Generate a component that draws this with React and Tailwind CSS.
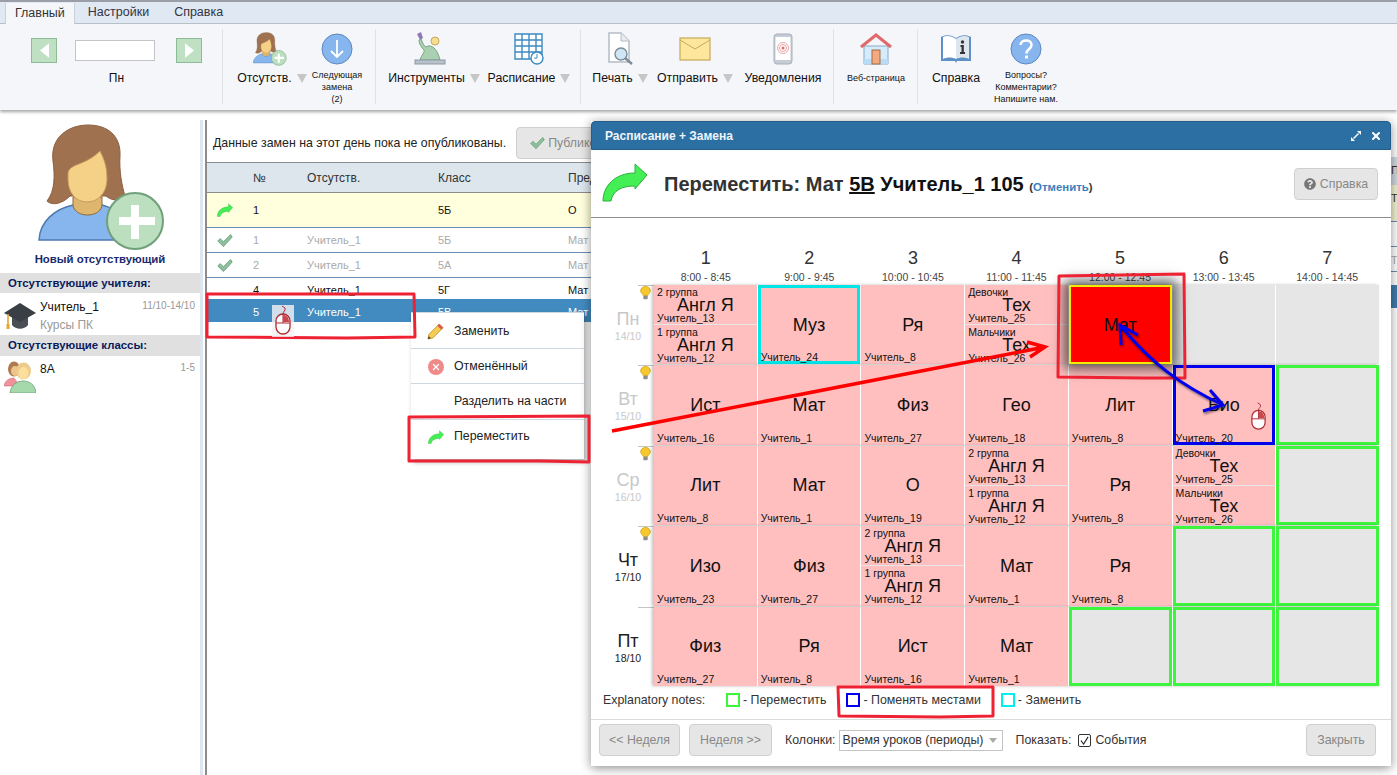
import { X } from "lucide-react";
import { FaQuestionCircle } from "react-icons/fa";

const TIMES = ["8:00 - 8:45", "9:00 - 9:45", "10:00 - 10:45", "11:00 - 11:45", "12:00 - 12:45", "13:00 - 13:45", "14:00 - 14:45"];

const eng = (a, b) => ({ split: [["2 группа", "Англ Я", a], ["1 группа", "Англ Я", b]] });
const tech = { split: [["Девочки", "Тех", "Учитель_25"], ["Мальчики", "Тех", "Учитель_26"]] };
const empty = { kind: "empty" };
const free = { kind: "free" };

const DAYS = [
  {
    name: "Пн", date: "14/10", dim: true, bulb: true,
    cells: [
      eng("Учитель_13", "Учитель_12"),
      { s: "Муз", t: "Учитель_24", kind: "swap" },
      { s: "Ря", t: "Учитель_8" },
      tech,
      { s: "Мат", kind: "current" },
      empty,
      empty,
    ],
  },
  {
    name: "Вт", date: "15/10", dim: true, bulb: true,
    cells: [
      { s: "Ист", t: "Учитель_16" },
      { s: "Мат", t: "Учитель_1" },
      { s: "Физ", t: "Учитель_27" },
      { s: "Гео", t: "Учитель_18" },
      { s: "Лит", t: "Учитель_8" },
      { s: "Био", t: "Учитель_20", kind: "blue" },
      free,
    ],
  },
  {
    name: "Ср", date: "16/10", dim: true, bulb: true,
    cells: [
      { s: "Лит", t: "Учитель_8" },
      { s: "Мат", t: "Учитель_1" },
      { s: "О", t: "Учитель_19" },
      eng("Учитель_13", "Учитель_12"),
      { s: "Ря", t: "Учитель_8" },
      tech,
      free,
    ],
  },
  {
    name: "Чт", date: "17/10", bulb: true,
    cells: [
      { s: "Изо", t: "Учитель_23" },
      { s: "Физ", t: "Учитель_27" },
      eng("Учитель_13", "Учитель_12"),
      { s: "Мат", t: "Учитель_1" },
      { s: "Ря", t: "Учитель_8" },
      free,
      free,
    ],
  },
  {
    name: "Пт", date: "18/10",
    cells: [
      { s: "Физ", t: "Учитель_27" },
      { s: "Ря", t: "Учитель_8" },
      { s: "Ист", t: "Учитель_16" },
      { s: "Мат", t: "Учитель_1" },
      free,
      free,
      free,
    ],
  },
];

const ROWS = [
  { n: "1", who: "", cls: "5Б", sub: "О", h: "h-[35px]", tone: "bg-[#ffffdd] text-[#111]", icon: "move" },
  { n: "1", who: "Учитель_1", cls: "5Б", sub: "Мат", h: "h-[25px] pt-px", tone: "text-[#aaa]", icon: "check" },
  { n: "2", who: "Учитель_1", cls: "5А", sub: "Мат", h: "h-[25px] pt-px", tone: "text-[#aaa]", icon: "check" },
  { n: "4", who: "Учитель_1", cls: "5Г", sub: "Мат", h: "h-[21px]", tone: "text-[#111] pt-[4px]" },
  { n: "5", who: "Учитель_1", cls: "5В", sub: "Мат", h: "h-[23px] pt-[3px]", tone: "bg-[#428bc0] text-white" },
];

function Avatar({ className }) {
  return (
    <svg viewBox="38 123 128 127" className={className}>
      <path d="M47 200C55 190 55 175 53 160C50 135 70 124 88 124C108 124 121 135 120 155C119 170 122 185 125 195C118 200 112 200 106 195L70 195C62 203 52 205 47 200Z" fill="#a0714f" stroke="#8a5f40" />
      <path d="M39 239C40 220 55 208 73 204C78 216 97 216 102 204C118 208 130 220 132 239Z" fill="#87b5ed" stroke="#4f7ab0" strokeWidth="1.5" />
      <path d="M73 196L73 205C76 217 99 217 102 205L102 196Z" fill="#deb66e" stroke="#8a6a3c" />
      <path d="M68 172C70 162 85 165 100 150C104 158 107 165 107 178C107 192 98 201 87 201C76 201 68 192 68 178Z" fill="#f5d188" stroke="#c79a5e" />
      <circle cx="135" cy="220" r="28" fill="#bcdfc0" stroke="#6fa07a" strokeWidth="2" />
      <path d="M131 204h8v12h16v8h-16v14h-8v-14h-12v-8h12z" fill="#fff" />
    </svg>
  );
}

function MoveArrow({ className }) {
  return (
    <svg viewBox="602 164 46 40" className={className}>
      <path d="M603 203C603 188 615 175 635 175L635 166L647 177L635 191L635 188C622 188 613 192 611 203Z" fill="#44ee55" stroke="#2cb03c" />
    </svg>
  );
}

function Check({ className }) {
  return (
    <svg viewBox="0 0 20 20" className={className}>
      <path d="M1 10L4 7L8 11L17 2L19 5L8 17Z" fill="#8fc09c" stroke="#5f9a72" />
    </svg>
  );
}

function MouseIcon({ className }) {
  return (
    <svg viewBox="0 0 18 30" className={className}>
      <path d="M9 9C9 6 12 6 11 3L8 1" fill="none" stroke="#b02a30" />
      <rect x="2" y="9" width="14" height="20" rx="7" fill="#fff" stroke="#b02a30" strokeWidth="1.3" />
      <path d="M2 18H16M9 9V18" stroke="#b02a30" />
      <path d="M9 10C13 10 15 13 15 17H9Z" fill="#c9484d" />
    </svg>
  );
}

function Bulb() {
  return (
    <svg viewBox="0 0 12 16" className="w-[11px] h-[14px]">
      <path d="M6 0.5C9 0.5 11.5 2.6 11.5 5.5C11.5 8 9 9 8.5 11H3.5C3 9 0.5 8 0.5 5.5C0.5 2.6 3 0.5 6 0.5Z" fill="#f7c82e" stroke="#d9a520" />
      <rect x="3.5" y="11" width="5" height="4" rx="1" fill="#8d8d8d" />
    </svg>
  );
}

function NavBtn({ flip }) {
  return (
    <div className="w-[26px] h-[25px] flex items-center justify-center bg-[#bfe0c2] border border-[#8dbb96]">
      <svg viewBox="0 0 10 16" className={`w-[9px] h-[15px] ${flip ? "rotate-180" : ""}`}>
        <path d="M10 0V16L0 8Z" fill="#fff" />
      </svg>
    </div>
  );
}

function Caret() {
  return <span className="inline-block ml-[5px] border-x-[5px] border-t-[9px] border-x-transparent border-t-[#c6c6c6]" />;
}

function RibbonItem({ icon, label, caret, small, width }) {
  return (
    <div className={`${width} shrink-0 flex flex-col items-center`}>
      <div className="h-[34px] flex items-center justify-center">{icon}</div>
      {small ? (
        <div className="mt-[3px] text-center text-[9px] leading-[12px] text-[#111]">{label}</div>
      ) : (
        <div className="mt-[3px] h-[18px] flex items-center whitespace-nowrap text-[12.3px] text-[#111]">
          {label}
          {caret && <Caret />}
        </div>
      )}
    </div>
  );
}

const Sep = () => <div className="w-px h-[75px] -mt-[3px] bg-[#dfe3e8] shrink-0" />;

function Ribbon() {
  return (
    <header className="h-[110px] shrink-0 flex flex-col border-t-2 border-t-[#9a9ea6] shadow-[0_2px_3px_rgba(0,0,0,0.35)] bg-[#f4f6f9]">
      <div className="h-[22px] flex items-end pl-[5px] bg-[#dfe8f3] border-b border-[#b8bfc9] text-[12.5px] text-[#334]">
        <div className="h-[21px] -mb-px px-[9px] flex items-center bg-[#f4f6f9] border-x border-[#c8d0da] text-[#333]">Главный</div>
        <div className="h-[21px] px-[13px] flex items-center">Настройки</div>
        <div className="h-[21px] px-[12px] flex items-center">Справка</div>
      </div>
      <div className="flex items-start pt-[8px]">
        <div className="w-[222px] shrink-0 flex flex-col pl-[31px] pt-[6px]">
          <div className="flex items-center">
            <NavBtn />
            <div className="ml-[18px] w-[80px] h-[21px] bg-white border border-[#c4c4c4]" />
            <div className="ml-[21px]"><NavBtn flip /></div>
          </div>
          <div className="mt-[7px] w-[171px] text-center text-xs text-[#111]">Пн</div>
        </div>
        <Sep />
        <div className="flex pl-[14px] w-[152px] shrink-0">
          <RibbonItem width="w-[70px]" label="Отсутств." caret icon={<Avatar className="w-[34px] h-[34px] mr-[5px]" />} />
          <RibbonItem width="w-[60px]" small label={<>Следующая<br />замена<br />(2)</>} icon={
            <svg viewBox="0 0 32 32" className="w-[32px] h-[32px]">
              <circle cx="16" cy="16" r="15" fill="#87b5ed" stroke="#5c88c4" />
              <path d="M16 7V24M10 18L16 24L22 18" fill="none" stroke="#fff" strokeWidth="1.8" />
            </svg>
          } />
        </div>
        <Sep />
        <div className="flex pl-[13px] w-[204px] shrink-0 gap-[10px]">
          <RibbonItem width="w-[90px]" label="Инструменты" caret icon={
            <svg viewBox="0 0 32 34" className="w-[32px] h-[34px] mr-[8px]">
              <path d="M3 2L7 0L9 6L6 8Z" fill="#8f7ab8" />
              <path d="M7 7C10 14 11 16 14 14C20 13 24 20 26 28H6C8 22 11 20 10 18C6 14 5 10 5 8Z" fill="#a9d0b0" stroke="#76a583" />
              <circle cx="21" cy="9" r="4" fill="#f7dd94" stroke="#c9a95a" />
              <rect x="1" y="28" width="30" height="4" fill="#b9c2cc" stroke="#8c97a3" />
            </svg>
          } />
          <RibbonItem width="w-[80px]" label="Расписание" caret icon={
            <svg viewBox="0 0 30 32" className="w-[30px] h-[32px]">
              <path d="M1 1H28V26H1ZM1 7H28M1 13H28M1 19H28M8 1V26M15 1V26M22 1V26" fill="#fff" stroke="#3d8ac4" strokeWidth="1.4" />
              <circle cx="23" cy="25" r="6" fill="#fff" stroke="#3d8ac4" strokeWidth="1.4" />
              <path d="M23 21V25H20" fill="none" stroke="#3d8ac4" />
            </svg>
          } />
        </div>
        <Sep />
        <div className="flex pl-[13px] w-[252px] shrink-0 gap-[13px]">
          <RibbonItem width="w-[52px]" label="Печать" caret icon={
            <svg viewBox="0 0 30 34" className="w-[30px] h-[34px]">
              <path d="M4 1H16L24 9V30H4Z" fill="#fff" stroke="#b4bcc5" strokeWidth="1.5" />
              <path d="M16 1V9H24" fill="#e8ecf0" stroke="#b4bcc5" />
              <circle cx="16" cy="22" r="6" fill="#cfe6f5" stroke="#7e8b96" strokeWidth="1.4" />
              <path d="M20 26L27 32" stroke="#7e8b96" strokeWidth="2.4" />
            </svg>
          } />
          <RibbonItem width="w-[72px]" label="Отправить" caret icon={
            <svg viewBox="0 0 32 24" className="w-[32px] h-[24px]">
              <rect x="1" y="1" width="30" height="22" fill="#fde79c" stroke="#c7a95a" strokeWidth="1.2" />
              <path d="M1 3L16 12L31 3" fill="none" stroke="#c7a95a" />
            </svg>
          } />
          <RibbonItem width="w-[78px]" label="Уведомления" icon={
            <svg viewBox="0 0 20 32" className="w-[20px] h-[32px]">
              <rect x="1" y="1" width="18" height="30" rx="3" fill="#c5ccd6" stroke="#a8b0bb" />
              <rect x="2.5" y="4" width="15" height="23" fill="#fff" />
              <circle cx="10" cy="15" r="5.5" fill="none" stroke="#efa4a4" />
              <circle cx="10" cy="15" r="3.5" fill="none" stroke="#efa4a4" />
              <circle cx="10" cy="15" r="1.5" fill="#e46a6a" />
            </svg>
          } />
        </div>
        <Sep />
        <div className="flex pl-[13px] w-[83px] shrink-0">
          <RibbonItem width="w-[58px]" small label={<span className="leading-[18px]">Веб-страница</span>} icon={
            <svg viewBox="0 0 32 32" className="w-[32px] h-[32px]">
              <path d="M4 13H28V31H4Z" fill="#d4ecfb" stroke="#85aacb" />
              <path d="M4 26H28V31H4Z" fill="#b8dcf5" />
              <path d="M1 14L16 2L31 14" fill="none" stroke="#df6a6a" strokeWidth="3" />
              <rect x="12" y="17" width="8" height="14" fill="#f5a97f" stroke="#a36a45" />
            </svg>
          } />
        </div>
        <Sep />
        <div className="flex pl-[13px] shrink-0 gap-[12px]">
          <RibbonItem width="w-[50px]" label="Справка" icon={
            <svg viewBox="0 0 32 30" className="w-[32px] h-[30px]">
              <path d="M1 3C6 0 12 1 16 4C20 1 26 0 31 3V27H17L16 29L15 27H1Z" fill="#5f8fc7" />
              <path d="M3 3C7 1 12 2 16 5V25C12 23 7 23 3 25Z" fill="#fff" />
              <path d="M16 5C20 2 25 1 29 3V25C25 23 20 23 16 25Z" fill="#dde6ee" />
              <circle cx="22.5" cy="8" r="1.7" fill="#333" />
              <path d="M20.5 11H23.8V18H25V20H20V18H21.5V13H20.5Z" fill="#333" />
            </svg>
          } />
          <RibbonItem width="w-[66px]" small label={<>Вопросы?<br />Комментарии?<br />Напишите нам.</>} icon={
            <svg viewBox="0 0 32 32" className="w-[32px] h-[32px]">
              <circle cx="16" cy="16" r="15" fill="#87b5ed" stroke="#5c88c4" />
              <path d="M10.5 12C11 6 21.5 6 21.5 12C21.5 16 16.5 16 16.5 20.5" fill="none" stroke="#fff" strokeWidth="2.6" />
              <rect x="15" y="22.5" width="3" height="3" fill="#fff" />
            </svg>
          } />
        </div>
      </div>
    </header>
  );
}

function Sidebar() {
  return (
    <aside className="w-[203px] shrink-0 border-r-[3px] border-[#dde6ee] pt-[4px]">
      <div className="pl-[38px]">
        <Avatar className="w-[128px] h-[127px]" />
      </div>
      <div className="text-center text-[11.4px] font-bold text-[#1a2a6c]">Новый отсутствующий</div>
      <div className="mt-[5px] h-[20px] pl-2 flex items-center bg-[#e0e0e0] text-[11.4px] font-bold text-[#0a1a5c]">Отсутствующие учителя:</div>
      <div className="h-[42px] flex pl-1 pr-[5px] pt-[7px]">
        <svg viewBox="0 0 32 30" className="w-[32px] h-[30px] mt-[1px] shrink-0">
          <path d="M8 14V24C12 29 20 29 24 24V14Z" fill="#4a4f55" />
          <path d="M16 2L32 12L16 21L0 12Z" fill="#3a3f46" />
          <path d="M4 13V24" stroke="#e8a62c" strokeWidth="1.6" />
          <rect x="2.5" y="23" width="3" height="5" fill="#e8a62c" />
        </svg>
        <div className="ml-[4px] flex-1 min-w-0">
          <div className="flex justify-between">
            <span className="text-xs leading-[14px] text-[#111]">Учитель_1</span>
            <span className="text-[10px] leading-[12px] text-[#999]">11/10-14/10</span>
          </div>
          <div className="mt-[4px] text-xs leading-[14px] text-[#999]">Курсы ПК</div>
        </div>
      </div>
      <div className="h-[21px] pl-2 flex items-center bg-[#e0e0e0] text-[11.4px] font-bold text-[#0a1a5c]">Отсутствующие классы:</div>
      <div className="flex pl-1 pr-[5px] pt-[5px]">
        <svg viewBox="4 360 32 32" className="w-[32px] h-[32px] shrink-0">
          <path d="M4 385C5 379 10 377 14 377L20 385Z" fill="#f0919b" stroke="#d0717b" strokeWidth="0.6" />
          <ellipse cx="14" cy="368" rx="6" ry="7.5" fill="#b07a50" />
          <ellipse cx="15" cy="370" rx="4" ry="5" fill="#eec48a" />
          <path d="M10 392C11 383 18 380 23 380C29 380 35 383 36 392Z" fill="#a5d9ac" stroke="#6fa07a" strokeWidth="0.8" />
          <ellipse cx="23.5" cy="370" rx="7.5" ry="8.5" fill="#eecb8a" />
          <ellipse cx="23.5" cy="372" rx="5" ry="6" fill="#fbdf9f" />
        </svg>
        <div className="ml-[4px] flex-1 flex justify-between">
          <span className="text-xs leading-[16px] text-[#111]">8А</span>
          <span className="text-[10px] leading-[14px] text-[#999]">1-5</span>
        </div>
      </div>
    </aside>
  );
}

function SubsTable() {
  return (
    <section className="flex-1 min-w-0 ml-[2px] border-l-2 border-[#8c8c8c] overflow-hidden">
      <div className="h-[43px] pl-[6px] pt-[4px] flex items-center border-b border-[#8c8c8c]">
        <span className="text-[12.35px] text-[#222] whitespace-nowrap">Данные замен на этот день пока не опубликованы.</span>
        <div className="ml-[10px] h-[32px] pl-[13px] pr-3 flex items-center gap-[3px] bg-[#e6e6e6] border border-[#cfcfcf] rounded-sm text-[12.35px] text-[#888]">
          <Check className="w-[15px] h-[15px]" />
          Публиковать
        </div>
      </div>
      <div className="h-[30px] pt-[1px] flex items-center bg-[#dde6ec] border-b border-[#8c8c8c] text-xs text-[#333]">
        <div className="w-[46px]" />
        <div className="w-[54px]">№</div>
        <div className="w-[131px]">Отсутств.</div>
        <div className="w-[130px]">Класс</div>
        <div>Предмет</div>
      </div>
      {ROWS.map((r, i) => (
        <div key={i} className={`${r.h} ${r.tone} flex overflow-hidden text-[11px] ${i < 3 ? "border-b border-[#6b8cb0] items-center" : i === 4 ? "items-center" : "items-start"}`}>
          <div className="w-[46px] pl-[10px] flex">
            {r.icon === "move" && <MoveArrow className="w-[16px] h-[14px]" />}
            {r.icon === "check" && <Check className="w-[16px] h-[16px]" />}
          </div>
          <div className="w-[54px]">{r.n}</div>
          <div className="w-[131px]">{r.who}</div>
          <div className="w-[130px]">{r.cls}</div>
          <div>{r.sub}</div>
        </div>
      ))}
    </section>
  );
}

function Sliver() {
  return (
    <div className="w-[6px] shrink-0 pt-[37px] overflow-hidden text-[11px] leading-[26px] whitespace-nowrap text-[#333]">
      <div className="h-[28px] bg-[#cfd8de]">Пр</div>
      <div className="h-[37px] bg-[#f2f2d0] border-b border-[#6b8cb0]">Те</div>
      <div className="h-[25px] bg-white border-b border-[#6b8cb0]" />
      <div className="h-[25px] bg-white border-b border-[#6b8cb0] text-[#aaa]">Те</div>
      <div className="h-[13px]" />
      <div className="h-[23px] bg-[#3f7cab]" />
    </div>
  );
}

function ContextMenu() {
  return (
    <div className="absolute left-[411px] top-[312px] w-[173px] h-[147px] flex flex-col bg-white border-t border-[#cdd8e2] shadow-[2px_3px_5px_rgba(0,0,0,0.35)] text-[12.35px] text-[#222] z-10">
      <div className="h-[36px] pt-px flex items-center border-b border-[#cdd8e2] pl-[43px] relative">
        <svg viewBox="0 0 18 18" className="absolute left-[16px] top-[10px] w-[17px] h-[17px]">
          <path d="M13 1L17 5L6 16L1 17L2 12Z" fill="#f5cd55" stroke="#c79a33" />
          <path d="M13 1L17 5L15 7L11 3Z" fill="#e0544f" />
          <path d="M1 17L2 14L4 16Z" fill="#333" />
        </svg>
        Заменить
      </div>
      <div className="h-[35px] flex items-center border-b border-[#cdd8e2] pl-[43px] relative">
        <div className="absolute left-[17px] top-[10px] w-[16px] h-[16px] rounded-full bg-[#f08a8a] flex items-center justify-center">
          <X size={10} strokeWidth={3} color="#fff" />
        </div>
        Отменённый
      </div>
      <div className="h-[35px] flex items-center pl-[43px]">Разделить на части</div>
      <div className="flex-1 flex items-center border-t border-[#cdd8e2] pl-[43px] pb-[6px] relative">
        <MoveArrow className="absolute left-[17px] top-[10px] w-[16px] h-[14px]" />
        Переместить
      </div>
    </div>
  );
}

function Sub({ caption, subject, teacher }) {
  return (
    <div className="flex-1 min-h-0 px-[3px] pt-[1px] flex flex-col text-[#111]">
      <div className="text-[10.5px] leading-[12px] whitespace-nowrap">{caption}</div>
      <div className="text-lg leading-[14px] text-center">{subject}</div>
      <div className="text-[10.5px] leading-[12px] whitespace-nowrap">{teacher}</div>
    </div>
  );
}

function Cell({ cell }) {
  if (cell.kind === "empty") return <div className="bg-[#e6e6e6]" />;
  if (cell.kind === "free") return <div className="bg-[#e6e6e6] border-[3px] border-[#3cf53c]" />;
  if (cell.split) {
    return (
      <div className="bg-[#ffbfbf] min-h-0 flex flex-col divide-y divide-[#e6e6e6]">
        <Sub caption={cell.split[0][0]} subject={cell.split[0][1]} teacher={cell.split[0][2]} />
        <Sub caption={cell.split[1][0]} subject={cell.split[1][1]} teacher={cell.split[1][2]} />
      </div>
    );
  }
  if (cell.kind === "current") {
    return (
      <div className="relative z-10 bg-[#ff0000] border-2 border-[#f4e900] shadow-[0_0_12px_5px_rgba(0,0,0,0.6)] flex items-center justify-center text-lg text-[#111]">
        {cell.s}
      </div>
    );
  }
  const border = cell.kind === "swap" ? "border-[#00e6e6]" : cell.kind === "blue" ? "border-[#0000ee]" : "border-transparent";
  return (
    <div className={`bg-[#ffbfbf] min-h-0 border-[3px] ${border} flex flex-col text-[#111]`}>
      <div className="flex-1 pt-[10px] flex items-center justify-center text-lg">{cell.s}</div>
      <div className="-mb-[3px] text-[10.5px] leading-[13px] whitespace-nowrap">{cell.t}</div>
    </div>
  );
}

function Timetable() {
  return (
    <div className="pr-[12px] pt-[30px] grid grid-cols-[63px_repeat(7,minmax(0,1fr))]">
      <div />
      {TIMES.map((t, i) => (
        <div key={t} className="h-[37px] flex flex-col items-center text-[#333]">
          <div className="text-lg leading-[20px]">{i + 1}</div>
          <div className="mt-[3px] text-[10.5px] leading-[12px] text-[#444]">{t}</div>
        </div>
      ))}
      <div className="col-span-8 grid grid-cols-[63px_repeat(7,minmax(0,1fr))] grid-rows-[repeat(5,minmax(0,1fr))] h-[401px] gap-y-px bg-white">
        {DAYS.map((d) => (
          <div key={d.name} className="contents">
            <div className="flex flex-col min-h-0">
              <div className="h-[21px] flex flex-col items-end">
                <div className="w-[16px] border-t border-[#c4c4c4]" />
                <div className="mr-[3px]">{d.bulb && <Bulb />}</div>
              </div>
              <div className={`pl-[11px] text-center ${d.dim ? "text-[#c8c8c8]" : "text-[#222]"}`}>
                <div className="text-lg leading-[22px] mt-[2px]">{d.name}</div>
                <div className="text-[10.5px] leading-[12px]">{d.date}</div>
              </div>
            </div>
            <div className="col-span-7 min-h-0 grid grid-cols-7 grid-rows-[minmax(0,1fr)] gap-x-px shadow-[-2px_0_3px_rgba(0,0,0,0.25)]">
              {d.cells.map((c, i) => <Cell key={i} cell={c} />)}
            </div>
          </div>
        ))}
      </div>
    </div>
  );
}

function Legend({ color, label }) {
  return (
    <div className="flex items-center gap-[3px] text-[12.4px] text-[#333]">
      <span className={`w-[14px] h-[14px] border-2 ${color}`} />
      {label}
    </div>
  );
}

function GrayBtn({ children, className }) {
  return (
    <div className={`h-[32px] flex items-center justify-center bg-[#e6e6e6] border border-[#cfcfcf] rounded-sm text-[12.35px] text-[#888] ${className}`}>
      {children}
    </div>
  );
}

function Dialog() {
  return (
    <div className="absolute left-[591px] top-[121px] w-[800px] h-[645px] flex flex-col bg-white shadow-[0_2px_10px_rgba(0,0,0,0.45)] z-20">
      <div className="h-[29px] shrink-0 pl-[13px] pr-[8px] flex items-center justify-between bg-[#2c6fa3] border border-[#245d8a] rounded-t-sm text-xs font-bold text-[#f0f4f8]">
        <span>Расписание + Замена</span>
        <div className="flex items-center gap-[9px]">
          <svg viewBox="0 0 10 10" className="w-[10px] h-[10px]">
            <path d="M6 0H10V4ZM0 10V6L4 10ZM7 2L8 3L3 8L2 7Z" fill="#fff" />
          </svg>
          <X size={12} strokeWidth={4} color="#fff" />
        </div>
      </div>
      <div className="h-[68px] shrink-0 pl-[11px] pr-[13px] flex items-center border-b border-[#8c8c8c]">
        <MoveArrow className="w-[46px] h-[40px] mb-[4px]" />
        <div className="ml-[16px] text-[20px] font-bold text-[#333] whitespace-nowrap">
          Переместить: Мат <span className="underline text-[#111]">5В</span> <span className="text-[#111]">Учитель_1 105</span>{" "}
          <span className="text-[11.4px] text-[#3a7fbd]"><span className="text-[#333]">(</span>Отменить<span className="text-[#333]">)</span></span>
        </div>
        <GrayBtn className="ml-auto w-[84px] gap-[4px] mt-[1px]">
          <FaQuestionCircle size={12} color="#777" />
          Справка
        </GrayBtn>
      </div>
      <Timetable />
      <div className="h-[33px] shrink-0 pl-[12px] pb-[5px] flex items-center text-[12.35px] text-[#333]">
        <span className="w-[123px]">Explanatory notes:</span>
        <Legend color="border-[#3cf53c]" label="- Переместить" />
        <div className="w-[20px]" />
        <Legend color="border-[#0000ee]" label="- Поменять местами" />
        <div className="w-[20px]" />
        <Legend color="border-[#00f0f0]" label="- Заменить" />
      </div>
      <div className="flex-1 pl-[8px] pr-[15px] pt-[4px] flex items-start border-t border-[#dcdcdc] text-[12.35px] text-[#333]">
        <GrayBtn className="w-[81px]">&lt;&lt; Неделя</GrayBtn>
        <GrayBtn className="ml-[9px] w-[83px]">Неделя &gt;&gt;</GrayBtn>
        <div className="ml-[13px] h-[32px] flex items-center">
          <span>Колонки:</span>
          <div className="ml-[3px] w-[164px] h-[21px] pl-[3px] pr-[5px] flex items-center justify-between bg-white border border-[#c4c4c4]">
            Время уроков (периоды)
            <span className="border-x-[4px] border-t-[5px] border-x-transparent border-t-[#aaa]" />
          </div>
          <span className="ml-[13px]">Показать:</span>
          <div className="ml-[7px] w-[13px] h-[13px] flex items-center justify-center border border-[#333] rounded-[2px]">
            <svg viewBox="0 0 10 10" className="w-[9px] h-[9px]"><path d="M1 5L4 9L9 1" fill="none" stroke="#222" strokeWidth="1.2" /></svg>
          </div>
          <span className="ml-[4px]">События</span>
        </div>
        <GrayBtn className="ml-auto w-[70px]">Закрыть</GrayBtn>
      </div>
    </div>
  );
}

// red and blue marks someone scribbled over the screenshot
function Annotations() {
  const red = { fill: "none", stroke: "#ee2233", strokeWidth: 3, strokeLinejoin: "round" };
  return (
    <svg className="absolute inset-0 w-full h-full pointer-events-none z-30" viewBox="0 0 1397 775">
      <path d="M207 294L414 294L415 337L347 338L207 337Z" {...red} />
      <path d="M1059 276L1184 274L1185 378L1143 378L1058 377Z" {...red} />
      <path d="M409 417L589 416L589 462L540 461L409 461Z" {...red} />
      <path d="M838 687L993 687L993 716L940 717L839 716Z" {...red} />
      <path d="M612 431L1045 347M1027 342L1045 347L1030 357" fill="none" stroke="#ff0000" strokeWidth="3.5" />
      <g className="drop-shadow-[1px_2px_1px_rgba(0,0,0,0.45)]">
        <path d="M1120 325C1150 362 1180 385 1223 405M1138 335L1120 325L1121 345M1210 390L1223 405L1203 411" fill="none" stroke="#0000ee" strokeWidth="3" />
      </g>
    </svg>
  );
}

export default function App() {
  return (
    <div className="relative w-[1397px] h-[775px] overflow-hidden bg-white flex flex-col font-['Liberation_Sans',Arial,sans-serif]">
      <Ribbon />
      <main className="flex-1 min-h-0 mt-[10px] flex">
        <Sidebar />
        <SubsTable />
        <Sliver />
      </main>
      <ContextMenu />
      <Dialog />
      <Annotations />
      <div className="absolute left-[272px] top-[305px] w-[22px] h-[32px] bg-[#f4f4f4]/80 flex justify-center z-30">
        <MouseIcon className="w-[18px] h-[30px]" />
      </div>
      <MouseIcon className="absolute left-[1250px] top-[401px] w-[17px] h-[30px] z-30" />
    </div>
  );
}
